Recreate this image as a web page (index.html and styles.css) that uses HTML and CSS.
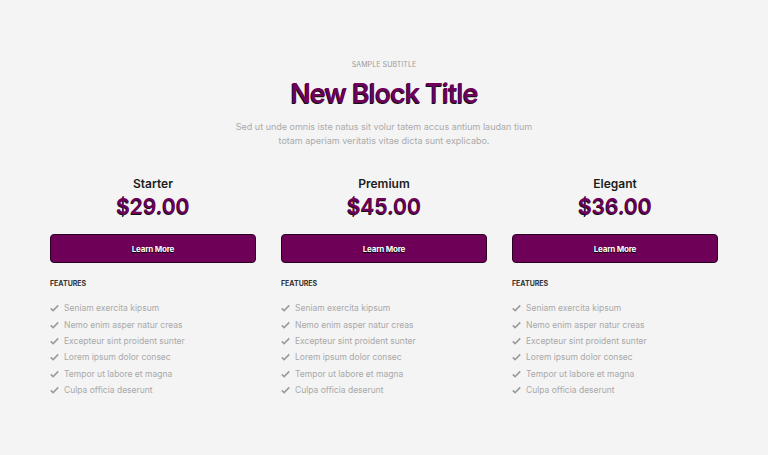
FILE: index.html
```html
<!DOCTYPE html>
<html lang="en">
<head>
<meta charset="utf-8">
<title>Pricing</title>
<link rel="stylesheet" href="styles.css">
</head>
<body>
<section class="pricing">
  <header class="head">
    <p class="subtitle">SAMPLE SUBTITLE</p>
    <h1 class="title">New Block Title</h1>
    <p class="lead">Sed ut unde omnis iste natus sit volur tatem accus antium laudan tium<br>totam aperiam veritatis vitae dicta sunt explicabo.</p>
  </header>
  <div class="plans">
    <div class="plan">
      <h2 class="plan-name">Starter</h2>
      <div class="price">$29.00</div>
      <a class="btn" href="#">Learn More</a>
      <h3 class="feat-head">FEATURES</h3>
      <ul class="feats">
        <li><svg class="chk" viewBox="0 0 12 10"><path d="M1 5.5l3.2 3L11 1.5" /></svg>Seniam exercita kipsum</li>
        <li><svg class="chk" viewBox="0 0 12 10"><path d="M1 5.5l3.2 3L11 1.5" /></svg>Nemo enim asper natur creas</li>
        <li><svg class="chk" viewBox="0 0 12 10"><path d="M1 5.5l3.2 3L11 1.5" /></svg>Excepteur sint proident sunter</li>
        <li><svg class="chk" viewBox="0 0 12 10"><path d="M1 5.5l3.2 3L11 1.5" /></svg>Lorem ipsum dolor consec</li>
        <li><svg class="chk" viewBox="0 0 12 10"><path d="M1 5.5l3.2 3L11 1.5" /></svg>Tempor ut labore et magna</li>
        <li><svg class="chk" viewBox="0 0 12 10"><path d="M1 5.5l3.2 3L11 1.5" /></svg>Culpa officia deserunt</li>
      </ul>
    </div>
    <div class="plan">
      <h2 class="plan-name">Premium</h2>
      <div class="price">$45.00</div>
      <a class="btn" href="#">Learn More</a>
      <h3 class="feat-head">FEATURES</h3>
      <ul class="feats">
        <li><svg class="chk" viewBox="0 0 12 10"><path d="M1 5.5l3.2 3L11 1.5" /></svg>Seniam exercita kipsum</li>
        <li><svg class="chk" viewBox="0 0 12 10"><path d="M1 5.5l3.2 3L11 1.5" /></svg>Nemo enim asper natur creas</li>
        <li><svg class="chk" viewBox="0 0 12 10"><path d="M1 5.5l3.2 3L11 1.5" /></svg>Excepteur sint proident sunter</li>
        <li><svg class="chk" viewBox="0 0 12 10"><path d="M1 5.5l3.2 3L11 1.5" /></svg>Lorem ipsum dolor consec</li>
        <li><svg class="chk" viewBox="0 0 12 10"><path d="M1 5.5l3.2 3L11 1.5" /></svg>Tempor ut labore et magna</li>
        <li><svg class="chk" viewBox="0 0 12 10"><path d="M1 5.5l3.2 3L11 1.5" /></svg>Culpa officia deserunt</li>
      </ul>
    </div>
    <div class="plan">
      <h2 class="plan-name">Elegant</h2>
      <div class="price">$36.00</div>
      <a class="btn" href="#">Learn More</a>
      <h3 class="feat-head">FEATURES</h3>
      <ul class="feats">
        <li><svg class="chk" viewBox="0 0 12 10"><path d="M1 5.5l3.2 3L11 1.5" /></svg>Seniam exercita kipsum</li>
        <li><svg class="chk" viewBox="0 0 12 10"><path d="M1 5.5l3.2 3L11 1.5" /></svg>Nemo enim asper natur creas</li>
        <li><svg class="chk" viewBox="0 0 12 10"><path d="M1 5.5l3.2 3L11 1.5" /></svg>Excepteur sint proident sunter</li>
        <li><svg class="chk" viewBox="0 0 12 10"><path d="M1 5.5l3.2 3L11 1.5" /></svg>Lorem ipsum dolor consec</li>
        <li><svg class="chk" viewBox="0 0 12 10"><path d="M1 5.5l3.2 3L11 1.5" /></svg>Tempor ut labore et magna</li>
        <li><svg class="chk" viewBox="0 0 12 10"><path d="M1 5.5l3.2 3L11 1.5" /></svg>Culpa officia deserunt</li>
      </ul>
    </div>
  </div>
</section>
</body>
</html>
```
FILE: styles.css
```css
* { box-sizing: border-box; }
html, body { margin: 0; padding: 0; }
body {
  background: #f4f4f4;
  font-family: "Inter", "Noto Sans", sans-serif;
  width: 768px;
  height: 455px;
  overflow: hidden;
}
.pricing {
  padding: 60px 50px 0;
}
.head {
  display: flex;
  flex-direction: column;
  align-items: center;
  text-align: center;
}
.subtitle {
  margin: 0;
  font-size: 7px;
  line-height: 10px;
  color: #9a9a9a;
  letter-spacing: 0.1px;
}
.title {
  margin: 7px 0 0;
  font-size: 27px;
  line-height: 34px;
  font-weight: 600;
  letter-spacing: -1px;
  color: #6e0058;
  text-shadow: -0.6px 0.6px 0 #111;
}
.lead {
  margin: 9px 0 0;
  font-size: 9px;
  line-height: 14px;
  color: #ababab;
}
.plans {
  margin-top: 28px;
  display: grid;
  grid-template-columns: repeat(3, 1fr);
  column-gap: 25px;
}
.plan {
  display: flex;
  flex-direction: column;
}
.plan-name {
  margin: 0;
  text-align: center;
  font-size: 12px;
  line-height: 16px;
  font-weight: 600;
  color: #1c1c1c;
}
.price {
  margin-top: 1px;
  text-align: center;
  font-size: 21px;
  line-height: 28px;
  font-weight: 600;
  color: #6e0058;
  text-shadow: -0.6px 0.6px 0 #111;
}
.btn {
  margin-top: 13px;
  height: 29px;
  display: flex;
  align-items: center;
  justify-content: center;
  background: #6e0058;
  border: 1px solid #2a0022;
  border-radius: 4px;
  color: #fff;
  font-size: 8px;
  font-weight: 700;
  text-decoration: none;
  letter-spacing: -0.2px;
  text-shadow: -0.6px 0.6px 0 #000;
}
.feat-head {
  margin: 15px 0 0;
  font-size: 7px;
  line-height: 12px;
  font-weight: 700;
  color: #333;
}
.feats {
  list-style: none;
  margin: 10px 0 0;
  padding: 0;
}
.feats li {
  display: flex;
  align-items: center;
  height: 16.4px;
  font-size: 8.5px;
  color: #a9a9a9;
}
.chk {
  width: 9px;
  height: 8px;
  margin-right: 5px;
  fill: none;
  stroke: #9a9a9a;
  stroke-width: 2;
}
```
